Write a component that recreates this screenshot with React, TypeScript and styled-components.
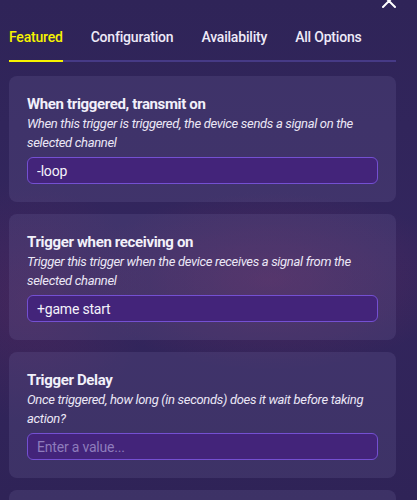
import styled, { createGlobalStyle } from "styled-components";

const GlobalStyle = createGlobalStyle`
  html, body {
    margin: 0;
    padding: 0;
  }
  body {
    background: #2e2357;
    font-family: Roboto, "Noto Sans", sans-serif;
    color: #f3f1fa;
  }
`;

const Page = styled.div`
  position: relative;
  height: 500px;
  overflow: hidden;
  padding: 0 21px 0 9px;
  background:
    radial-gradient(ellipse 190px 90px at 270px 280px, rgba(130, 45, 95, 0.35), transparent),
    radial-gradient(ellipse 120px 120px at 30px 300px, rgba(120, 40, 90, 0.25), transparent),
    linear-gradient(180deg, #2f2458 0%, #33265e 50%, #2f2357 100%);
`;

const CloseButton = styled.button`
  position: absolute;
  top: -7px;
  right: 20px;
  width: 16px;
  height: 16px;
  padding: 0;
  border: none;
  background: none;
  color: #ffffff;
  cursor: pointer;
`;

const TabBar = styled.nav`
  display: flex;
  gap: 28px;
  padding-top: 27px;
  border-bottom: 2px solid #463a86;
`;

const Tab = styled.div<{ $active?: boolean }>`
  font-size: 14px;
  line-height: 20px;
  letter-spacing: -0.2px;
  font-weight: 500;
  color: ${(p) => (p.$active ? "#f7f300" : "#eeeaf8")};
  padding-bottom: 13px;
  margin-bottom: -2px;
  border-bottom: 2px solid ${(p) => (p.$active ? "#f7f300" : "transparent")};
  cursor: pointer;
`;

const CardList = styled.div`
  display: flex;
  flex-direction: column;
  gap: 12px;
  margin-top: 14px;
`;

const Card = styled.section`
  min-height: 126px;
  box-sizing: border-box;
  padding: 18px;
  border-radius: 8px;
  background: rgba(115, 105, 160, 0.22);
`;

const Title = styled.h3`
  margin: 0;
  font-size: 15px;
  line-height: 20px;
  letter-spacing: -0.35px;
  font-weight: 700;
  color: #f2f0fa;
`;

const Description = styled.p`
  margin: 0;
  font-size: 13px;
  line-height: 19px;
  letter-spacing: -0.32px;
  font-style: italic;
  color: #ebe7f6;
`;

const Field = styled.input`
  display: block;
  box-sizing: border-box;
  width: 100%;
  height: 27px;
  margin-top: 5px;
  padding: 0 9px;
  border: 1px solid #7450d2;
  border-radius: 6px;
  background: #43247a;
  font-family: Roboto, "Noto Sans", sans-serif;
  font-size: 14px;
  letter-spacing: -0.2px;
  color: #f4f2fb;
  outline: none;

  &::placeholder {
    color: #8e7cbc;
  }
`;

const tabs = ["Featured", "Configuration", "Availability", "All Options"];

const options = [
  {
    title: "When triggered, transmit on",
    description:
      "When this trigger is triggered, the device sends a signal on the selected channel",
    value: "-loop",
  },
  {
    title: "Trigger when receiving on",
    description:
      "Trigger this trigger when the device receives a signal from the selected channel",
    value: "+game start",
  },
  {
    title: "Trigger Delay",
    description:
      "Once triggered, how long (in seconds) does it wait before taking action?",
    value: "",
  },
];

function App() {
  return (
    <>
      <GlobalStyle />
      <Page>
        <CloseButton aria-label="Close">
          <svg width="16" height="16" viewBox="0 0 16 16" fill="none">
            <path
              d="M2 2L14 14M14 2L2 14"
              stroke="currentColor"
              strokeWidth="2"
              strokeLinecap="round"
            />
          </svg>
        </CloseButton>
        <TabBar>
          {tabs.map((tab, i) => (
            <Tab key={tab} $active={i === 0}>
              {tab}
            </Tab>
          ))}
        </TabBar>
        <CardList>
          {options.map((opt) => (
            <Card key={opt.title}>
              <Title>{opt.title}</Title>
              <Description>{opt.description}</Description>
              <Field defaultValue={opt.value} placeholder="Enter a value..." />
            </Card>
          ))}
          <Card />
        </CardList>
      </Page>
    </>
  );
}

export default App;
